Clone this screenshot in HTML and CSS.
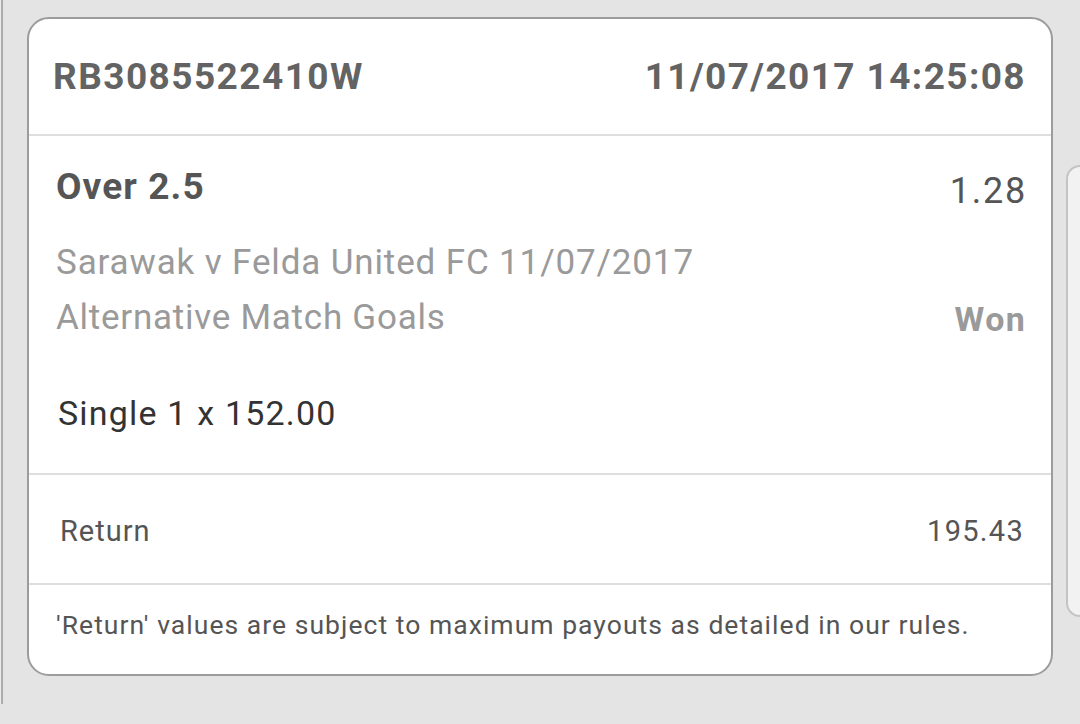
FILE: index.html
```html
<!DOCTYPE html>
<html lang="en">
<head>
    <meta charset="UTF-8">
    <meta name="viewport" content="width=device-width, initial-scale=1.0">
    <title>Bet Receipt</title>
    <link rel="stylesheet" href="styles.css">
</head>
<body>

<!-- Edge of the previous card -->
<div class="peek-left"></div>

<!-- Bet receipt card -->
<div class="card">
    <div class="card-header">
        <span class="ref">RB3085522410W</span>
        <span class="stamp">11/07/2017 14:25:08</span>
    </div>

    <div class="selection">
        <div class="sel-row">
            <span class="sel-name">Over 2.5</span>
            <span class="sel-odds">1.28</span>
        </div>
        <div class="sel-meta event">Sarawak v Felda United FC 11/07/2017</div>
        <div class="sel-row">
            <span class="sel-meta market">Alternative Match Goals</span>
            <span class="sel-result">Won</span>
        </div>
        <div class="stake">Single 1 x 152.00</div>
    </div>

    <div class="return-row">
        <span class="return-label">Return</span>
        <span class="return-value">195.43</span>
    </div>

    <div class="disclaimer">'Return' values are subject to maximum payouts as detailed in our rules.</div>
</div>

<!-- Edge of the next card -->
<div class="peek-right"></div>

</body>
</html>
```

FILE: styles.css
```css
body, html {
    margin: 0;
    padding: 0;
    font-family: Roboto, "Noto Sans", Arial, sans-serif;
    background-color: #e4e4e4;
    overflow: hidden;
}

body {
    display: flex;
    align-items: flex-start;
    height: 724px;
}

/* Neighbouring cards peeking in at the sides */
.peek-left {
    width: 1px;
    height: 704px;
    border-right: 2px solid #acacac;
    background-color: #ececec;
}

.peek-right {
    flex: 1;
    height: 448px;
    margin-top: 165px;
    margin-left: 13px;
    background-color: #f2f2f2;
    border: 2px solid #c4c4c4;
    border-right: none;
    border-radius: 20px 0 0 20px;
}

/* Main card */
.card {
    width: 1026px;
    height: 659px;
    box-sizing: border-box;
    margin: 17px 0 0 24px;
    background-color: #fff;
    border: 2px solid #9c9c9c;
    border-radius: 22px;
    display: flex;
    flex-direction: column;
    overflow: hidden;
}

.card-header {
    height: 115px;
    padding: 0 26px 0 24px;
    display: flex;
    justify-content: space-between;
    align-items: center;
    border-bottom: 2px solid #dedede;
    color: #636363;
    font-size: 37px;
    font-weight: bold;
}

.ref {
    letter-spacing: 1.45px;
}

.stamp {
    letter-spacing: 1.4px;
    margin-right: -1px;
}

/* Selection block */
.selection {
    padding: 27px 26px 36px 27px;
    border-bottom: 2px solid #dedede;
}

.sel-row {
    display: flex;
    justify-content: space-between;
    align-items: flex-start;
}

.sel-name {
    font-size: 37px;
    font-weight: bold;
    line-height: 48px;
    letter-spacing: 1.1px;
    color: #555;
}

.sel-odds {
    font-size: 36px;
    line-height: 48px;
    margin: 4px -2px 0 0;
    letter-spacing: 1.75px;
    color: #555;
}

.sel-meta {
    font-size: 35px;
    line-height: 55px;
    color: #9a9a9a;
}

.event {
    margin-top: 20px;
    letter-spacing: 0.86px;
}

.market {
    letter-spacing: 0.75px;
}

.sel-result {
    font-size: 34px;
    font-weight: bold;
    line-height: 55px;
    margin: 2px -1px 0 0;
    letter-spacing: 1.3px;
    color: #9a9a9a;
}

.stake {
    margin-top: 42px;
    padding-left: 2px;
    font-size: 34px;
    line-height: 48px;
    letter-spacing: 1.18px;
    color: #333;
}

/* Return row */
.return-row {
    height: 110px;
    padding: 3px 28px 0 31px;
    box-sizing: border-box;
    display: flex;
    justify-content: space-between;
    align-items: center;
    border-bottom: 2px solid #dedede;
    font-size: 29px;
    color: #555;
}

.return-label {
    letter-spacing: 1px;
}

.return-value {
    letter-spacing: 1.3px;
    margin-right: -1px;
}

.disclaimer {
    flex: 1;
    padding: 23px 26px 0 27px;
    font-size: 26.5px;
    line-height: 34px;
    letter-spacing: 1.04px;
    color: #555;
}
```
